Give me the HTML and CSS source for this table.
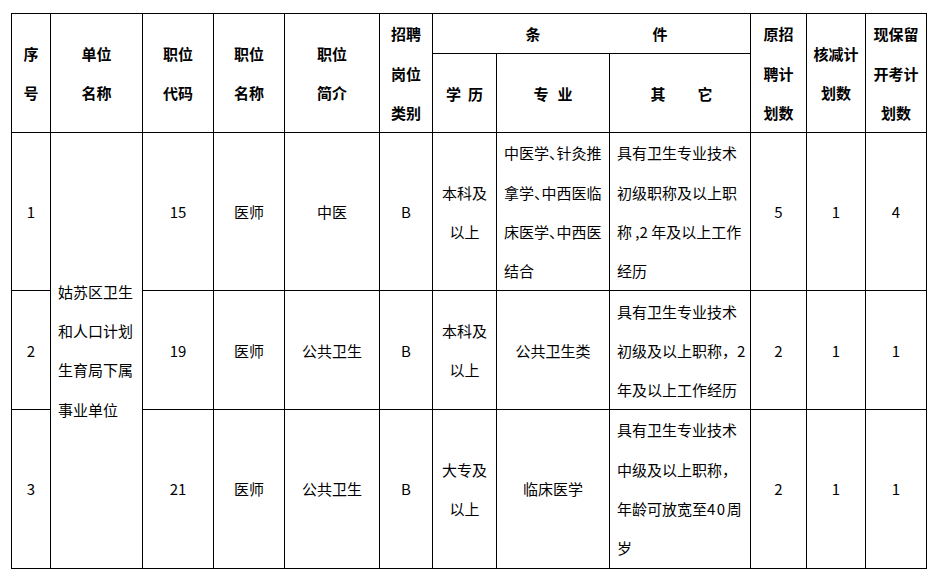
FILE: index.html
```html
<!DOCTYPE html>
<html lang="zh-CN">
<head>
<meta charset="utf-8">
<title>招聘计划核减表</title>
<link rel="stylesheet" href="styles.css">
</head>
<body>
<div class="page">
<table class="plan">
  <colgroup>
    <col class="c-no"><col class="c-unit"><col class="c-code"><col class="c-name"><col class="c-brief"><col class="c-type">
    <col class="c-edu"><col class="c-major"><col class="c-other"><col class="c-orig"><col class="c-cut"><col class="c-keep">
  </colgroup>
  <thead>
    <tr class="h1">
      <th rowspan="2">序<br>号</th>
      <th rowspan="2">单位<br>名称</th>
      <th rowspan="2">职位<br>代码</th>
      <th rowspan="2">职位<br>名称</th>
      <th rowspan="2">职位<br>简介</th>
      <th rowspan="2">招聘<br>岗位<br>类别</th>
      <th colspan="3" class="cond"><span class="gap-xl">条</span>件</th>
      <th rowspan="2">原招<br>聘计<br>划数</th>
      <th rowspan="2">核减计<br>划数</th>
      <th rowspan="2">现保留<br>开考计<br>划数</th>
    </tr>
    <tr class="h2">
      <th><span class="gap-s">学</span>历</th>
      <th><span class="gap-m">专</span>业</th>
      <th class="other-h"><span class="gap-l">其</span>它</th>
    </tr>
  </thead>
  <tbody>
    <tr class="r-tall">
      <td>1</td>
      <td rowspan="3" class="left unit">姑苏区卫生<br>和人口计划<br>生育局下属<br>事业单位</td>
      <td>15</td>
      <td>医师</td>
      <td>中医</td>
      <td>B</td>
      <td>本科及<br>以上</td>
      <td class="left half-punct">中医学、针灸推<br>拿学、中西医临<br>床医学、中西医<br>结合</td>
      <td class="left">具有卫生专业技术<br>初级职称及以上职<br>称 ,2 年及以上工作<br>经历</td>
      <td>5</td>
      <td>1</td>
      <td>4</td>
    </tr>
    <tr class="r-mid">
      <td>2</td>
      <td>19</td>
      <td>医师</td>
      <td>公共卫生</td>
      <td>B</td>
      <td>本科及<br>以上</td>
      <td>公共卫生类</td>
      <td class="left">具有卫生专业技术<br>初级及以上职称，2<br>年及以上工作经历</td>
      <td>2</td>
      <td>1</td>
      <td>1</td>
    </tr>
    <tr class="r-tall">
      <td>3</td>
      <td>21</td>
      <td>医师</td>
      <td>公共卫生</td>
      <td>B</td>
      <td>大专及<br>以上</td>
      <td>临床医学</td>
      <td class="left">具有卫生专业技术<br>中级及以上职称，<br>年龄可放宽至<span class="num-wide">40</span>周<br>岁</td>
      <td>2</td>
      <td>1</td>
      <td>1</td>
    </tr>
  </tbody>
</table>
</div>
</body>
</html>
```

FILE: styles.css
```css
html, body {
  margin: 0;
  padding: 0;
  background: #fff;
}

.page {
  padding: 13px 0 0 11px;
}

.plan {
  border-collapse: collapse;
  table-layout: fixed;
  width: 915px;
  font-family: "Noto Sans CJK SC", "Noto Sans", sans-serif;
  font-size: 15px;
  color: #000;
}

.c-no { width: 39px; }
.c-unit { width: 92px; }
.c-code { width: 71px; }
.c-name { width: 71px; }
.c-brief { width: 95px; }
.c-type { width: 53px; }
.c-edu { width: 64px; }
.c-major { width: 113px; }
.c-other { width: 141px; }
.c-orig { width: 56px; }
.c-cut { width: 59px; }
.c-keep { width: 61px; }

.plan th,
.plan td {
  border: 1px solid #000;
  padding: 0;
  text-align: center;
  vertical-align: middle;
  line-height: 39.3px;
  white-space: nowrap;
  overflow: hidden;
}

.plan th {
  font-weight: bold;
}

.h1 { height: 40px; }
.h2 { height: 79px; }
.r-tall { height: 158px; }
.r-mid { height: 119px; }

.plan td.left {
  text-align: left;
  padding-left: 7px;
}

.half-punct {
  font-feature-settings: "halt" 1;
}

.cond {
  padding-left: 10px !important;
}

.other-h {
  padding-left: 3px !important;
}

.num-wide {
  letter-spacing: 1.5px;
}

.gap-s { margin-right: 7px; }
.gap-m { margin-right: 9px; }
.gap-l { margin-right: 32px; }
.gap-xl { margin-right: 112px; }
```
